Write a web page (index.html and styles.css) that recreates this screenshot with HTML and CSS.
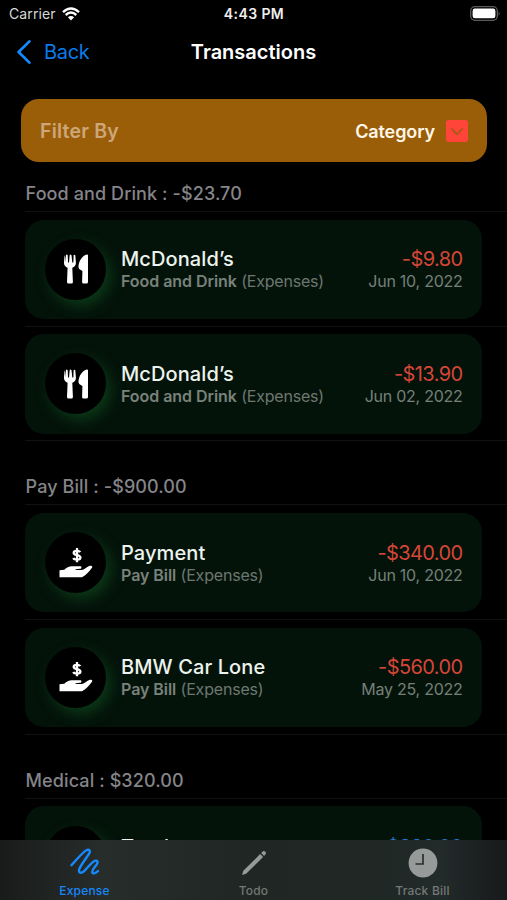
FILE: index.html
```html
<!DOCTYPE html>
<html lang="en">
<head>
<meta charset="utf-8">
<title>Transactions</title>
<link rel="stylesheet" href="styles.css">
</head>
<body>
<svg class="defs" width="0" height="0">
  <symbol id="utensils" viewBox="0 0 26 30">
    <path d="M1.6 1.2 L1 8.2 C.7 11.3 2.4 12.8 4.6 13.7 L4 28 Q4 29.6 5.6 29.6 H8.4 Q10 29.6 9.9 28 L9.3 13.7 C11.6 12.8 13.2 11.3 12.9 8.2 L12.3 1.2 Q11.4 .1 10.6 1.2 L10.4 8.4 H9.3 L8.5 1.2 Q7.6 0 6.7 0.9 L6 8.4 H5 L4.7 1.2 Q3.4 0 2.9 1.2 L2.6 8.4 L2.2 3 Z"/>
    <path d="M25 1.6 V28 Q25 29.6 23.4 29.6 H20.6 Q19 29.6 19.1 28 L19.4 17 L16.2 15 Q14.9 13.8 15.7 10.5 C17 5 20 1.8 23.6 .5 Q25 .2 25 1.6Z"/>
  </symbol>
  <symbol id="hand-dollar" viewBox="0 0 34 30">
    <path class="dollar" d="M21.2 4.1 C20.4 2.6 14.7 2 14.7 4.9 C14.7 7.8 21.4 6.4 21.4 9.5 C21.4 12.4 15.2 12 14.3 10 M18 0 V14.2"/>
    <path d="M.5 22.2 L5.3 21.8 C7.6 19.4 9.8 18.2 13 18.2 H21 C23 18.2 22.8 20.6 21 20.8 L16.5 21.2 V22 H22.5 C25.4 21.8 27.7 19.2 30.2 18 C32.3 17.1 34.2 18.4 32.8 20 C30 23.6 27 27.5 23 29.2 H.5Z"/>
  </symbol>
</svg>
<main class="screen">
  <div class="status">
    <div class="carrier">Carrier
      <svg class="wifi" viewBox="0 0 18 14"><path d="M1 5.2 Q9-2 17 5.2 M3.7 8 Q9 3.2 14.3 8"/><path class="solid" d="M5.9 10.2 Q9 7.7 12.1 10.2 L9 13.5Z"/></svg>
    </div>
    <div class="time">4:43 PM</div>
    <svg class="battery" viewBox="0 0 31 15"><rect class="case" x=".7" y=".7" width="26.6" height="13.6" rx="4.2"/><rect class="charge" x="2.6" y="2.6" width="22.8" height="9.6" rx="2.3"/><path class="tip" d="M28.6 5 Q30.4 7.5 28.6 10Z"/></svg>
  </div>
  <nav class="nav">
    <a class="back"><svg viewBox="0 0 14 24"><path d="M12.4 1.4 L1.6 12 L12.4 22.6"/></svg><span>Back</span></a>
    <h1>Transactions</h1>
  </nav>
  <div class="filter">
    <span class="filter-label">Filter By</span>
    <span class="filter-value">Category</span>
    <svg class="drop" viewBox="0 0 22 22"><rect width="22" height="22" rx="3"/><path d="M5.3 8.3 L11 14.3 L16.7 8.3"/></svg>
  </div>
  <section class="group">
    <h2>Food and Drink : -$23.70</h2>
    <div class="row"><article class="card">
      <div class="badge"><svg class="utensils"><use href="#utensils"/></svg></div>
      <div class="info"><h3>McDonald’s</h3><p><b>Food and Drink</b> (Expenses)</p></div>
      <div class="amount"><strong>-$9.80</strong><time>Jun 10, 2022</time></div>
    </article></div>
    <div class="row"><article class="card">
      <div class="badge"><svg class="utensils"><use href="#utensils"/></svg></div>
      <div class="info"><h3>McDonald’s</h3><p><b>Food and Drink</b> (Expenses)</p></div>
      <div class="amount"><strong>-$13.90</strong><time>Jun 02, 2022</time></div>
    </article></div>
  </section>
  <section class="group">
    <h2>Pay Bill : -$900.00</h2>
    <div class="row"><article class="card">
      <div class="badge"><svg class="hand"><use href="#hand-dollar"/></svg></div>
      <div class="info"><h3>Payment</h3><p><b>Pay Bill</b> (Expenses)</p></div>
      <div class="amount"><strong>-$340.00</strong><time>Jun 10, 2022</time></div>
    </article></div>
    <div class="row"><article class="card">
      <div class="badge"><svg class="hand"><use href="#hand-dollar"/></svg></div>
      <div class="info"><h3>BMW Car Lone</h3><p><b>Pay Bill</b> (Expenses)</p></div>
      <div class="amount"><strong>-$560.00</strong><time>May 25, 2022</time></div>
    </article></div>
  </section>
  <section class="group">
    <h2>Medical : $320.00</h2>
    <div class="row"><article class="card clipped">
      <div class="badge"></div>
      <div class="info"><h3>Tooth</h3></div>
      <div class="amount income"><strong>$320.00</strong></div>
    </article></div>
  </section>
  <footer class="tabs">
    <a class="tab active"><svg viewBox="0 0 30 30"><path d="M1.5 17.2 C6.5 12 13 3.5 17 2 C19.3 1.2 20.8 2.8 19.2 5.4 C17 9.5 9.5 18.5 9 22.2 C8.7 25 11.2 25.7 13.8 23.4 C17 20.7 21.7 13.8 24.8 12.8 C27.3 12 28.4 13.9 26.8 16.3 C25 19.2 22 21.7 22.2 24 C22.4 26.2 25.5 25.7 28 23"/></svg><span>Expense</span></a>
    <a class="tab"><svg viewBox="0 0 30 30"><path d="M3 27 L4.3 22.8 L21.2 6 L24.1 8.9 L7.2 25.7Z"/><path d="M22.2 5 L24 3.3 Q25.3 2.6 26.4 3.7 Q27.5 4.9 26.7 6.1 L25.1 7.9Z"/></svg><span>Todo</span></a>
    <a class="tab"><svg class="clock" viewBox="0 0 30 30"><circle cx="15" cy="15" r="14.4"/><path d="M15 6 V16 H7.5"/></svg><span>Track Bill</span></a>
  </footer>
</main>
</body>
</html>
```
FILE: styles.css
```css
* { box-sizing: border-box; }
body { margin: 0; background: #000; font-family: Inter, "Liberation Sans", sans-serif; color: #fff; }
h1, h2, h3, p { margin: 0; }
svg { display: block; flex: none; }
.defs { position: absolute; }
.screen { position: relative; width: 507px; height: 900px; overflow: hidden; }
.status { display: grid; grid-template-columns: 1fr auto 1fr; align-items: center; height: 27px; padding: 0 6px 0 9px; font-size: 14px; line-height: 20px; }
.carrier { display: flex; align-items: center; gap: 6px; color: #d8d8d8; letter-spacing: .1px; }
.wifi { width: 18px; height: 14px; fill: none; stroke: #fff; stroke-width: 2.4; }
.wifi .solid { fill: #fff; stroke: none; }
.time { margin-right: 2px; font-weight: 600; letter-spacing: .4px; color: #eee; }
.battery { width: 31px; height: 15px; justify-self: end; }
.case { fill: none; stroke: #5b5b5b; stroke-width: 1.3; }
.charge { fill: #fff; }
.tip { fill: #666; }
.nav { display: grid; grid-template-columns: 1fr auto 1fr; align-items: center; height: 50px; padding: 0 17px; }
.back { display: flex; align-items: center; gap: 13px; color: #0a7be8; font-size: 20px; letter-spacing: -.3px; }
.back svg { width: 14px; height: 24px; fill: none; stroke: #148aff; stroke-width: 2.7; stroke-linecap: round; stroke-linejoin: round; }
h1 { font-size: 20px; font-weight: 600; line-height: 26px; }
.filter { display: flex; align-items: center; margin: 22px 20px 0 21px; height: 63px; border-radius: 18px; background: #9a5e08; padding: 1px 19px 0; font-size: 18px; font-weight: 600; }
.filter-label { flex: 1; color: #cda67a; font-size: 19.5px; font-weight: 600; letter-spacing: .2px; }
.filter-value { color: #fff7e9; letter-spacing: -.1px; }
.drop { width: 22px; height: 22px; margin-left: 11px; }
.drop rect { fill: #ff453a; }
.drop path { fill: none; stroke: #a65b13; stroke-width: 1.8; }
.group { margin-left: 25px; }
.group + .group { margin-top: 26px; }
.filter + .group { margin-top: 12px; }
h2 { height: 38px; padding-left: .6px; border-bottom: 1px solid #101211; color: #858589; font-size: 18px; font-weight: 500; line-height: 39.4px; letter-spacing: .1px; white-space: nowrap; }
.row { height: 114.7px; padding: 7.6px 25px 0 0; border-bottom: 1px solid #101211; }
.card { display: flex; align-items: center; height: 99.4px; padding: 0 19.5px 0 20px; border-radius: 19px; background: #04130a; }
.badge { display: grid; place-items: center; width: 61px; height: 61px; border-radius: 50%; background: #000; box-shadow: 5px 6px 13px #0b3817; flex: none; }
.utensils { width: 26px; height: 30px; fill: #fff; }
.hand { width: 34px; height: 30px; fill: #fff; }
.dollar { fill: none; stroke: #fff; stroke-width: 2.3; }
.info { flex: 1; margin-left: 15px; }
h3 { font-size: 20px; font-weight: 500; line-height: 24px; letter-spacing: .1px; white-space: nowrap; color: #edf3ee; }
p { font-size: 16px; line-height: 20px; letter-spacing: -.2px; color: #6d7770; white-space: nowrap; }
p b { font-weight: 600; letter-spacing: -.05px; color: #78827b; }
.amount { display: grid; justify-items: end; line-height: 20px; white-space: nowrap; }
strong { font-size: 20px; font-weight: 400; line-height: 24px; letter-spacing: -.6px; color: #d64637; }
.income strong { color: #2478cf; }
.amount time { font-size: 16px; letter-spacing: -.25px; color: #748078; }
.clipped .info, .clipped .amount { padding-bottom: 19px; }
.tabs { position: absolute; left: 0; right: 0; bottom: 0; height: 60px; display: grid; grid-template-columns: repeat(3, 1fr); background: linear-gradient(90deg, #191b1b, #272d2a 20%, #202623 50%, #202826 75%, #222a2a 87%, #18191b); }
.tab { display: flex; flex-direction: column; align-items: center; padding-top: 8px; color: #747876; font-size: 12px; font-weight: 500; line-height: 16px; letter-spacing: .2px; }
.tab span { margin-top: 5px; }
.tab svg { width: 30px; height: 30px; fill: #969b99; }
.active { color: #1686f8; }
.tab.active svg { fill: none; stroke: #168aff; stroke-width: 2.4; stroke-linecap: round; stroke-linejoin: round; }
.clock path { fill: none; stroke: #29302d; stroke-width: 1.7; }
```
